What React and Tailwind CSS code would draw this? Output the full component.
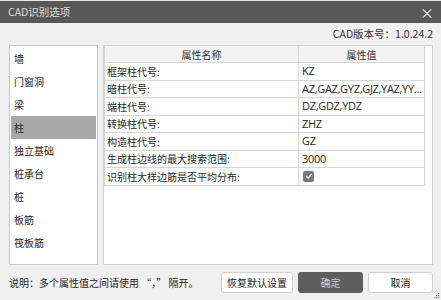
import React from 'react';

const categories = ['墙', '门窗洞', '梁', '柱', '独立基础', '桩承台', '桩', '板筋', '筏板筋'];

const props = [
  ['框架柱代号:', 'KZ'],
  ['暗柱代号:', 'AZ,GAZ,GYZ,GJZ,YAZ,YY...'],
  ['端柱代号:', 'DZ,GDZ,YDZ'],
  ['转换柱代号:', 'ZHZ'],
  ['构造柱代号:', 'GZ'],
  ['生成柱边线的最大搜索范围:', '3000'],
  ['识别柱大样边筋是否平均分布:', null],
];

const App = () => {
  return (
    <div
      className="w-[441px] h-[300px] bg-[#f0f0f0] overflow-hidden flex flex-col text-[#262626]"
      style={{ fontFamily: '"Noto Sans CJK SC", "Noto Sans", sans-serif' }}
    >
      <div className="h-[1px] bg-[#e8e8e8]" />
      {/* Title bar */}
      <div className="h-[22px] bg-[#585858] flex items-center justify-between pl-[8px] pr-[7px]">
        <span className="text-[10.5px] text-[#dcdcdc]">CAD识别选项</span>
        <span className="text-[14px] text-[#eee] leading-none">×</span>
      </div>

      {/* Version */}
      <div className="h-[22px] flex items-center justify-end pr-[8px] text-[10.5px] text-[#333]">
        CAD版本号：1.0.24.2
      </div>

      {/* Main area */}
      <div className="h-[220px] flex gap-[5px] pl-[9px] pr-[8px]">
        <div className="w-[90px] bg-white border border-[#c8c8c8] pt-[1px] px-[1px]">
          {categories.map((c) => (
            <div
              key={c}
              className={`h-[23px] flex items-center pl-[3px] text-[10px] ${c === '柱' ? 'bg-[#a8a8a8]' : ''}`}
            >
              {c}
            </div>
          ))}
        </div>

        <div className="flex-1 bg-white border border-[#d0d0d0] pr-[7px]">
          <div className="border-l border-[#d6d6d6] w-[321px]">
            <div className="h-[17px] flex bg-[#f3f3f3] border-b border-[#d6d6d6] text-[10px] text-[#333]">
              <div className="w-[194px] border-r border-[#d6d6d6] flex items-center justify-center">属性名称</div>
              <div className="flex-1 border-r border-[#d6d6d6] flex items-center justify-center">属性值</div>
            </div>
            {props.map(([k, v]) => (
              <div key={k} className="h-[17.5px] flex border-b border-[#d6d6d6] text-[10px]">
                <div className="w-[194px] border-r border-[#d6d6d6] flex items-center pl-[2px]">{k}</div>
                <div className="flex-1 border-r border-[#d6d6d6] flex items-center pl-[3px] whitespace-nowrap overflow-hidden">
                  {v === null ? (
                    <span className="ml-[1px] w-[11px] h-[11px] rounded-[2px] bg-[#7a7a7a] flex items-center justify-center">
                      <svg width="8" height="8" viewBox="0 0 8 8">
                        <path d="M1.3 4.2 L3.2 6 L6.8 2" fill="none" stroke="#f4f4f4" strokeWidth="1.3" />
                      </svg>
                    </span>
                  ) : (
                    <span style={{ fontFamily: '"Open Sans", "Noto Sans", sans-serif' }} className="text-[11px] tracking-[-0.3px]">{v}</span>
                  )}
                </div>
              </div>
            ))}
          </div>
        </div>
      </div>

      {/* Footer */}
      <div className="flex-1 relative flex items-center pl-[9px] pr-[8px]">
        <span className="text-[10px] text-[#262626] whitespace-pre">说明：多个属性值之间请使用 “，” 隔开。</span>
        <div className="ml-auto flex gap-[5px]">
          <button className="w-[72px] h-[21px] bg-white border border-[#d0d0d0] rounded-[3px] text-[10px] text-[#222]">恢复默认设置</button>
          <button className="w-[65px] h-[21px] bg-[#5e5e5e] border border-[#5e5e5e] rounded-[3px] text-[10px] text-[#cfcfcf]">确定</button>
          <button className="w-[65px] h-[21px] bg-white border border-[#d0d0d0] rounded-[3px] text-[10px] text-[#222]">取消</button>
        </div>
        <svg className="absolute right-[1px] bottom-[1px]" width="6" height="6" viewBox="0 0 6 6">
          <rect x="4" y="0" width="1.2" height="1.2" fill="#777" />
          <rect x="2" y="2" width="1.2" height="1.2" fill="#777" />
          <rect x="4" y="2" width="1.2" height="1.2" fill="#777" />
          <rect x="0" y="4" width="1.2" height="1.2" fill="#777" />
          <rect x="2" y="4" width="1.2" height="1.2" fill="#777" />
          <rect x="4" y="4" width="1.2" height="1.2" fill="#777" />
        </svg>
      </div>
    </div>
  );
};

export default App;
